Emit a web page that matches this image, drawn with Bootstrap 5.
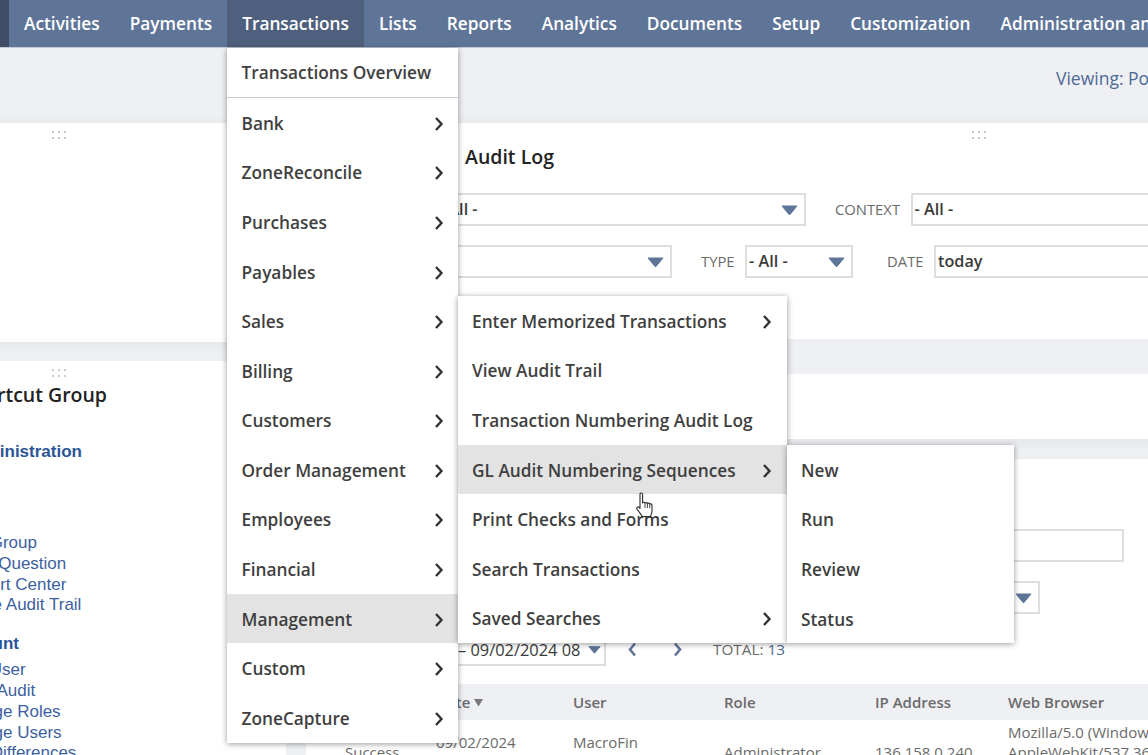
<!DOCTYPE html>
<html lang="en">
<head>
  <meta charset="UTF-8" />
  <meta name="viewport" content="width=device-width, initial-scale=1.0" />
  <title>Transactions</title>
  <link href="https://cdn.jsdelivr.net/npm/bootstrap@5.3.0/dist/css/bootstrap.min.css" rel="stylesheet" />
  <style>
    html, body { height: 100%; overflow: hidden; }
    body { background: #eff0f4; font-family: "Open Sans", sans-serif; color: #333; position: relative; }

    .topnav { height: 48px; background: #5f7598; border-bottom: 1px solid #c3cad6; padding-left: 9px; white-space: nowrap; overflow: hidden; box-shadow: inset 9px 0 0 #3f4d66; }
    .topnav a { display: block; padding: 0 15px; line-height: 47px; color: #fff; font-size: 17.28px; font-weight: 600; text-decoration: none; }
    .topnav a.cur { background: #4e607d; }

    .subband { height: 75px; padding-left: 1056px; padding-top: 17px; font-size: 17.5px; color: #4d6a94; white-space: nowrap; background: linear-gradient(to bottom, #eff0f4 90%, #e8e9ec); }

    .page-cols { width: 1820px; margin-left: -168px; gap: 20px; }
    .col-left { width: 454px; flex: none; }
    .col-right { width: 1346px; flex: none; }

    .pane { background: #fff; display: flow-root; }
    .pane-gap { height: 19px; background: linear-gradient(to bottom, #e6e7ea, #eff0f4 60%); }
    .grip { width: 18px; height: 9px; margin: 7px auto 0; background-image: radial-gradient(circle, #c9c9c9 1px, transparent 1.3px); background-size: 6px 6px; background-position: 0 -1px; }

    .left-a { height: 219px; }
    .left-b { height: 400px; white-space: nowrap; overflow: hidden; }
    .left-inner { padding-left: 130px; }
    .pane-title { font-size: 19.5px; font-weight: 600; color: #222; margin: 0; line-height: 28px; }
    .left-inner .pane-title { margin-top: 4px; }
    .sc-head { font-family: "Liberation Sans", sans-serif; font-size: 17px; font-weight: 700; color: #2a5597; line-height: 21px; }
    .sc-links { font-family: "Liberation Sans", sans-serif; font-size: 17px; line-height: 20.8px; list-style: none; padding: 0; margin: 0 0 0 -11px; color: #3d5f9f; }
    .sc-head-two { margin-left: -11px; }

    .right-a { height: 216px; }
    .right-inner { padding-left: 129px; }
    .right-inner .pane-title { padding-left: 30px; margin-top: 4px; margin-bottom: 22px; }
    .band-a { height: 35px; background: #eff0f4; }
    .right-b { height: 65px; }
    .band-b { height: 20px; background: linear-gradient(to bottom, #e6e7ea, #eff0f4 60%); }
    .right-c { height: 400px; }

    .fld { height: 33px; border: 2px solid #dedede; background: #fff; padding: 0 6px 0 2px; font-size: 16.2px; font-weight: 600; line-height: 29px; color: #3a3a3a; white-space: nowrap; flex: none; }
    .fld svg { flex: none; }
    .fld-label { font-size: 14.8px; color: #6b6b6b; text-transform: uppercase; flex: none; margin: 0 10.5px 0 29px; }
    .fld-label.lbl-date { margin-left: 34px; }
    .w-371 { width: 371px; }
    .w-237 { width: 237px; }
    .w-108 { width: 108px; }
    .w-long { width: 500px; }
    .filter-row { height: 33px; margin-bottom: 19px; }

    .flt-one { height: 33px; margin-top: 70px; padding-left: 594px; }
    .flt-two { height: 33px; margin-top: 19px; padding-left: 594px; }
    .flt-pager { height: 32px; margin-top: 19px; padding-left: 140px; }
    .pager-sel { width: 160px; padding-left: 10px; padding-right: 3px; font-size: 16.4px; font-weight: 400; }
    .pager-total { font-size: 15.3px; color: #6b6b6b; }
    .pager-total span { color: #4d6a94; }

    .log-table { table-layout: fixed; width: 1300px; margin: 19px 0 0 25px; font-size: 15px; color: #6b6b6b; border-collapse: collapse; }
    .log-table th { height: 36px; background: #eff0f4; font-weight: 600; padding: 0 0 0 5px; vertical-align: middle; }
    .log-table td { padding: 0 0 0 5px; line-height: 20px; vertical-align: middle; height: 64px; white-space: nowrap; }
    .log-table td.status-cell { padding-left: 14px; }

    .flyout { position: absolute; display: block; margin: 0; padding: 0; border: 0; border-radius: 0; background: #fff; min-width: 0; font-size: 17.28px; font-weight: 600; box-shadow: 0 1px 6px rgba(0,0,0,.4); }
    .flyout .dropdown-item { height: 49.58px; padding: 2px 14px 0 14.5px; color: #3f3f3f; font-weight: 600; display: flex; align-items: center; justify-content: space-between; }
    .flyout .dropdown-item.cur { background: #e3e3e3; }
    .flyout .dropdown-item.overview-item { height: 49px; padding-top: 0; }
    .flyout hr { margin: 0; border-top: 1px solid #c8c8c8; opacity: 1; }
    .menu-one { left: 227px; top: 48px; width: 231px; }
    .menu-two { left: 458px; top: 296px; width: 329px; }
    .menu-two .dropdown-item { padding-left: 14px; padding-right: 15px; }
    .menu-three { left: 787px; top: 445px; width: 227px; }
    .menu-three .dropdown-item { padding-left: 14px; }

    .hand { position: absolute; left: 635px; top: 492px; z-index: 1001; }
  </style>
</head>
<body>
  <nav class="topnav d-flex">
    <a href="#">Activities</a>
    <a href="#">Payments</a>
    <a href="#" class="cur">Transactions</a>
    <a href="#">Lists</a>
    <a href="#">Reports</a>
    <a href="#">Analytics</a>
    <a href="#">Documents</a>
    <a href="#">Setup</a>
    <a href="#">Customization</a>
    <a href="#">Administration and</a>
  </nav>

  <div class="subband">Viewing: Po</div>

  <div class="page-cols d-flex">
    <div class="col-left">
      <div class="pane left-a"><div class="grip"></div></div>
      <div class="pane-gap"></div>
      <div class="pane left-b">
        <div class="grip"></div>
        <div class="left-inner">
          <h2 class="pane-title">Shortcut Group</h2>
          <div class="sc-head" style="margin-top:32px">Administration</div>
          <ul class="sc-links" style="margin-top:71px">
            <li>New Group</li>
            <li>Ask a Question</li>
            <li>Support Center</li>
            <li>Create Audit Trail</li>
          </ul>
          <div class="sc-head sc-head-two" style="margin-top:17px">Account</div>
          <ul class="sc-links" style="margin-top:6px">
            <li>New User</li>
            <li>Login Audit</li>
            <li>Manage Roles</li>
            <li>Manage Users</li>
            <li>Role Differences</li>
          </ul>
        </div>
      </div>
    </div>

    <div class="col-right">
      <div class="pane right-a">
        <div class="grip"></div>
        <div class="right-inner">
          <h2 class="pane-title">Audit Log</h2>
          <div class="filter-row d-flex align-items-center">
            <div class="fld w-371 d-flex justify-content-between align-items-center">
              <span>- All -</span>
              <svg width="17" height="10" viewBox="0 0 17 10"><path d="M1 1h15L9 9.500h-1z" fill="#5f7598" stroke="#5f7598" stroke-linejoin="round"/></svg>
            </div>
            <span class="fld-label">Context</span>
            <div class="fld w-long"><span>- All -</span></div>
          </div>
          <div class="filter-row d-flex align-items-center">
            <div class="fld w-237 d-flex justify-content-end align-items-center">
              <svg width="17" height="10" viewBox="0 0 17 10"><path d="M1 1h15L9 9.500h-1z" fill="#5f7598" stroke="#5f7598" stroke-linejoin="round"/></svg>
            </div>
            <span class="fld-label">Type</span>
            <div class="fld w-108 d-flex justify-content-between align-items-center">
              <span>- All -</span>
              <svg width="17" height="10" viewBox="0 0 17 10"><path d="M1 1h15L9 9.500h-1z" fill="#5f7598" stroke="#5f7598" stroke-linejoin="round"/></svg>
            </div>
            <span class="fld-label lbl-date">Date</span>
            <div class="fld w-long"><span>today</span></div>
          </div>
        </div>
      </div>
      <div class="band-a"></div>
      <div class="pane right-b"></div>
      <div class="band-b"></div>
      <div class="pane right-c">
        <div class="flt-one"><div class="fld" style="width:224px"></div></div>
        <div class="flt-two">
          <div class="fld d-flex justify-content-end align-items-center" style="width:140px">
            <svg width="17" height="10" viewBox="0 0 17 10"><path d="M1 1h15L9 9.500h-1z" fill="#5f7598" stroke="#5f7598" stroke-linejoin="round"/></svg>
          </div>
        </div>
        <div class="flt-pager d-flex align-items-center">
          <div class="fld pager-sel d-flex justify-content-between align-items-center">
            <span>– 09/02/2024 08</span>
            <svg width="13" height="9" viewBox="0 0 17 10"><path d="M1 1h15L9 9.500h-1z" fill="#5f7598" stroke="#5f7598" stroke-linejoin="round"/></svg>
          </div>
          <svg width="10" height="15" viewBox="0 0 10 15" style="margin-left:21px"><path d="M8 1.500 3 7.500l5 6" fill="none" stroke="#5f7598" stroke-width="2.6"/></svg>
          <svg width="10" height="15" viewBox="0 0 10 15" style="margin-left:36px"><path d="M2 1.500 7 7.500l-5 6" fill="none" stroke="#5f7598" stroke-width="2.6"/></svg>
          <div class="pager-total" style="margin-left:30px">TOTAL: <span>13</span></div>
        </div>
        <table class="log-table">
          <colgroup>
            <col style="width:100px" /><col style="width:137px" /><col style="width:151px" /><col style="width:151px" /><col style="width:133px" /><col />
          </colgroup>
          <thead>
            <tr>
              <th></th>
              <th>Date <svg width="9" height="9" viewBox="0 0 9 9" style="vertical-align:1px"><path d="M0 1h9L4.500 8.500z" fill="#777"/></svg></th>
              <th>User</th><th>Role</th><th>IP Address</th><th>Web Browser</th>
            </tr>
          </thead>
          <tbody>
            <tr>
              <td class="status-cell">Success</td>
              <td>09/02/2024<br />08:00 am</td>
              <td>MacroFin<br />Admin</td>
              <td>Administrator</td>
              <td>136.158.0.240</td>
              <td>Mozilla/5.0 (Windows NT 10.0)<br />AppleWebKit/537.36<br />Chrome</td>
            </tr>
          </tbody>
        </table>
      </div>
    </div>
  </div>

  <div class="dropdown-menu flyout menu-one">
    <a class="dropdown-item overview-item" href="#">Transactions Overview</a>
    <hr />
    <a class="dropdown-item" href="#">Bank <svg width="10" height="14" viewBox="0 0 10 14"><path d="M2 1l5.500 6L2 13" fill="none" stroke="#333" stroke-width="2.4"/></svg></a>
    <a class="dropdown-item" href="#">ZoneReconcile <svg width="10" height="14" viewBox="0 0 10 14"><path d="M2 1l5.500 6L2 13" fill="none" stroke="#333" stroke-width="2.4"/></svg></a>
    <a class="dropdown-item" href="#">Purchases <svg width="10" height="14" viewBox="0 0 10 14"><path d="M2 1l5.500 6L2 13" fill="none" stroke="#333" stroke-width="2.4"/></svg></a>
    <a class="dropdown-item" href="#">Payables <svg width="10" height="14" viewBox="0 0 10 14"><path d="M2 1l5.500 6L2 13" fill="none" stroke="#333" stroke-width="2.4"/></svg></a>
    <a class="dropdown-item" href="#">Sales <svg width="10" height="14" viewBox="0 0 10 14"><path d="M2 1l5.500 6L2 13" fill="none" stroke="#333" stroke-width="2.4"/></svg></a>
    <a class="dropdown-item" href="#">Billing <svg width="10" height="14" viewBox="0 0 10 14"><path d="M2 1l5.500 6L2 13" fill="none" stroke="#333" stroke-width="2.4"/></svg></a>
    <a class="dropdown-item" href="#">Customers <svg width="10" height="14" viewBox="0 0 10 14"><path d="M2 1l5.500 6L2 13" fill="none" stroke="#333" stroke-width="2.4"/></svg></a>
    <a class="dropdown-item" href="#">Order Management <svg width="10" height="14" viewBox="0 0 10 14"><path d="M2 1l5.500 6L2 13" fill="none" stroke="#333" stroke-width="2.4"/></svg></a>
    <a class="dropdown-item" href="#">Employees <svg width="10" height="14" viewBox="0 0 10 14"><path d="M2 1l5.500 6L2 13" fill="none" stroke="#333" stroke-width="2.4"/></svg></a>
    <a class="dropdown-item" href="#">Financial <svg width="10" height="14" viewBox="0 0 10 14"><path d="M2 1l5.500 6L2 13" fill="none" stroke="#333" stroke-width="2.4"/></svg></a>
    <a class="dropdown-item cur" href="#">Management <svg width="10" height="14" viewBox="0 0 10 14"><path d="M2 1l5.500 6L2 13" fill="none" stroke="#333" stroke-width="2.4"/></svg></a>
    <a class="dropdown-item" href="#">Custom <svg width="10" height="14" viewBox="0 0 10 14"><path d="M2 1l5.500 6L2 13" fill="none" stroke="#333" stroke-width="2.4"/></svg></a>
    <a class="dropdown-item" href="#">ZoneCapture <svg width="10" height="14" viewBox="0 0 10 14"><path d="M2 1l5.500 6L2 13" fill="none" stroke="#333" stroke-width="2.4"/></svg></a>
  </div>

  <div class="dropdown-menu flyout menu-two">
    <a class="dropdown-item" href="#">Enter Memorized Transactions <svg width="10" height="14" viewBox="0 0 10 14"><path d="M2 1l5.500 6L2 13" fill="none" stroke="#333" stroke-width="2.4"/></svg></a>
    <a class="dropdown-item" href="#">View Audit Trail</a>
    <a class="dropdown-item" href="#">Transaction Numbering Audit Log</a>
    <a class="dropdown-item cur" href="#">GL Audit Numbering Sequences <svg width="10" height="14" viewBox="0 0 10 14"><path d="M2 1l5.500 6L2 13" fill="none" stroke="#333" stroke-width="2.4"/></svg></a>
    <a class="dropdown-item" href="#">Print Checks and Forms</a>
    <a class="dropdown-item" href="#">Search Transactions</a>
    <a class="dropdown-item" href="#">Saved Searches <svg width="10" height="14" viewBox="0 0 10 14"><path d="M2 1l5.500 6L2 13" fill="none" stroke="#333" stroke-width="2.4"/></svg></a>
  </div>

  <div class="dropdown-menu flyout menu-three">
    <a class="dropdown-item" href="#">New</a>
    <a class="dropdown-item" href="#">Run</a>
    <a class="dropdown-item" href="#">Review</a>
    <a class="dropdown-item" href="#">Status</a>
  </div>

  <svg class="hand" width="20" height="28" viewBox="0 0 20 28">
    <path d="M5 2.200c0-1.600 2.600-1.600 2.600 0V11c0-1 2.400-1 2.400 .3 0-1 2.400-1 2.400 .4 .2-.9 2.300-.8 2.400 .6 .3-.8 2.200-.6 2.200 1v6c0 2-.8 3.400-1.600 5.200H7.200c-1-2.200-3-4.400-5.200-7.400-1-1.600 .9-3 2.200-1.700L5 16.500z" fill="#fff" stroke="#2e2e2e" stroke-width="1.100" stroke-linejoin="round"/>
    <path d="M10 11.500v4.500M12.400 11.800v4.200M14.800 12.400v3.600" fill="none" stroke="#2e2e2e" stroke-width=".9"/>
  </svg>

  <script src="https://cdn.jsdelivr.net/npm/bootstrap@5.3.0/dist/js/bootstrap.bundle.min.js"></script>
</body>
</html>
